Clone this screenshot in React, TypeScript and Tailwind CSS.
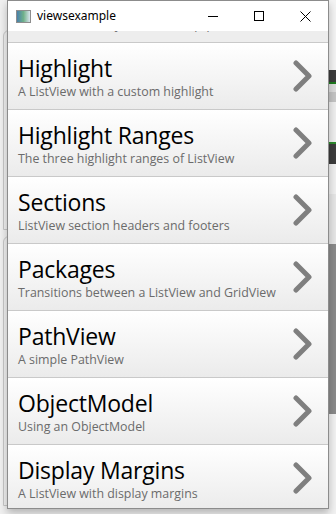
import React from "react";

const items = [
    { title: "Highlight", sub: "A ListView with a custom highlight" },
    { title: "Highlight Ranges", sub: "The three highlight ranges of ListView" },
    { title: "Sections", sub: "ListView section headers and footers" },
    { title: "Packages", sub: "Transitions between a ListView and GridView" },
    { title: "PathView", sub: "A simple PathView" },
    { title: "ObjectModel", sub: "Using an ObjectModel" },
    { title: "Display Margins", sub: "A ListView with display margins" },
];

const Chevron = () => (
    <svg width="22" height="32" viewBox="0 0 22 32" className="shrink-0">
        <path d="M4 3 L17 16 L4 29" fill="none" stroke="#7f7f7f" strokeWidth="5" strokeLinecap="round" strokeLinejoin="round" />
    </svg>
);

const Row = ({ title, sub }: { title: string; sub: string }) => (
    <div className="h-[67px] shrink-0 flex items-center justify-between pl-[10px] pr-[14px] bg-gradient-to-b from-white to-[#ebebeb] border-b border-[#c9c9c9]">
        <div className="flex flex-col">
            <span className="text-[23px] leading-[28px] text-black tracking-[-0.2px]">{title}</span>
            <span className="text-[12.4px] leading-[14px] text-[#6b6b6b] mt-[3px]">{sub}</span>
        </div>
        <Chevron />
    </div>
);

export default function App() {
    return (
        <div className="w-[336px] h-[514px] bg-[#f0f0f0] flex overflow-hidden relative" style={{ fontFamily: '"Open Sans", "Noto Sans", sans-serif' }}>
            {/* desktop behind */}
            <div className="absolute left-[3px] top-[30px] w-[20px] h-[200px] border border-[#c8c8c8] rounded-tl-[6px]" />
            <div className="absolute left-[3px] top-[236px] w-[20px] h-[270px] border border-[#c8c8c8] rounded-tl-[6px]" />
            <div className="absolute right-0 top-0 w-[8px] h-[514px] flex flex-col">
                <div className="h-[70px] bg-[#f4f4f4]" />
                <div className="h-[12px] bg-[#3c3c3c]" />
                <div className="h-[2px] bg-[#1e7a1e]" />
                <div className="h-[8px] bg-[#dcdcdc]" />
                <div className="h-[10px] bg-[#c4c4c4]" />
                <div className="h-[40px] bg-[#efefef]" />
                <div className="h-[2px] bg-[#2e8b2e]" />
                <div className="h-[20px] bg-[#3c3c3c]" />
                <div className="h-[30px] bg-[#f0f0f0]" />
                <div className="h-[50px] bg-[#e6e6e6]" />
                <div className="h-[170px] bg-[#8a8a8a]" />
                <div className="h-[100px] bg-[#f2f2f2]" />
            </div>

            <div className="relative ml-[7px] w-[322px] h-[509px] bg-white border border-[#8c8c8c] flex flex-col shadow-[0_4px_8px_rgba(0,0,0,0.25)]">
                <div className="h-[30px] shrink-0 bg-white flex items-center" style={{ fontFamily: '"Noto Sans", sans-serif' }}>
                    <div className="ml-[8px] w-[15px] h-[13px] border border-[#8d8d8d] bg-gradient-to-r from-[#4a7fa8] via-[#6fb08a] to-[#d8e4ee]" />
                    <span className="ml-[6px] text-[12px] text-black">viewsexample</span>
                    <div className="ml-auto flex items-center h-full">
                        <div className="w-[46px] h-full flex items-center justify-center">
                            <div className="w-[10px] h-px bg-black" />
                        </div>
                        <div className="w-[46px] h-full flex items-center justify-center">
                            <div className="w-[10px] h-[10px] border border-black" />
                        </div>
                        <div className="w-[46px] h-full flex items-center justify-center">
                            <svg width="11" height="11" viewBox="0 0 11 11">
                                <path d="M0.5 0.5 L10.5 10.5 M10.5 0.5 L0.5 10.5" stroke="#000" strokeWidth="1" />
                            </svg>
                        </div>
                    </div>
                </div>
                <div className="flex-1 flex flex-col overflow-hidden bg-[#efefef]">
                    <div className="h-[12px] shrink-0 overflow-hidden border-b border-[#c9c9c9] bg-[#ededed]">
                        <div className="-mt-[55px]">
                            <div className="h-[67px] flex items-center pl-[10px]">
                                <div className="flex flex-col">
                                    <span className="text-[23px] leading-[28px]">Basic</span>
                                    <span className="text-[12.4px] leading-[14px] text-[#6b6b6b] mt-[3px]">A ListView with dynamic items pq</span>
                                </div>
                            </div>
                        </div>
                    </div>
                    {items.map((it) => (
                        <Row key={it.title} title={it.title} sub={it.sub} />
                    ))}
                </div>
            </div>
        </div>
    );
}
